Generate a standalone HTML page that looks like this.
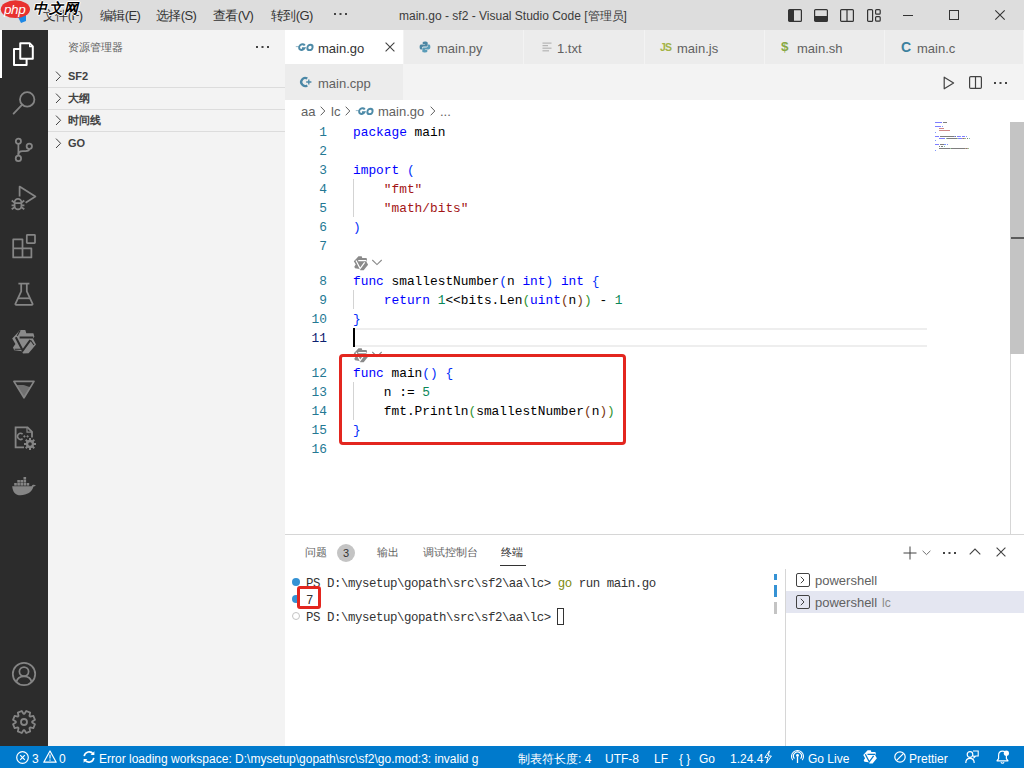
<!DOCTYPE html>
<html><head><meta charset="utf-8">
<style>
*{box-sizing:border-box}
body{margin:0;width:1024px;height:768px;overflow:hidden;position:relative;font-family:"Liberation Sans",sans-serif;background:#fff}
.a{position:absolute}
.t{position:absolute;white-space:pre;line-height:1}
svg{position:absolute;overflow:visible}
#title{left:0;top:0;width:1024px;height:30px;background:#dddddd}
#act{left:0;top:30px;width:48px;height:716px;background:#2c2c2c}
#side{left:48px;top:30px;width:237px;height:716px;background:#f3f3f3}
#status{left:0;top:746px;width:1024px;height:22px;background:#007acc}
.menu{font-size:13px;color:#333;top:9px;letter-spacing:-0.6px}
.tab{position:absolute;height:34px;background:#ececec;border-right:1px solid #f3f3f3}
.tabt{font-size:13px;color:#616161;top:11px}
.code{font-family:"Liberation Mono",monospace;font-size:12.83px;color:#000}
.ln{font-family:"Liberation Mono",monospace;font-size:12.83px;color:#237893;text-align:right;width:40px;left:287px}
.kw{color:#0000ff}.str{color:#a31515}.num{color:#098658}.b1{color:#0431fa}.b2{color:#319331}.b3{color:#7b3814}
.term{font-family:"Liberation Mono",monospace;font-size:12.4px;letter-spacing:-0.44px;color:#333}
.st{font-size:12px;color:#fff;top:6.5px}
</style></head><body>

<!-- TITLE BAR -->
<div id="title" class="a">
  <svg style="left:0;top:0" width="32" height="26" viewBox="0 0 32 26"><path d="M17 15 L26 14 L26 21 L21 23 Z" fill="#1e88e5"/><ellipse cx="15.4" cy="9.2" rx="14.6" ry="8.9" fill="#e8322f"/></svg>
  <div class="t" style="left:4px;top:3px;font-size:13.5px;font-style:italic;color:#fff;letter-spacing:-0.4px">php</div>
  <div class="t menu" style="left:43px">文件(F)</div>
  <div class="t" style="left:33px;top:1px;font-size:14px;font-weight:bold;font-style:italic;color:#000;letter-spacing:1.5px;text-shadow:1px 0 0 #fff,-1px 0 0 #fff,0 1px 0 #fff,0 -1px 0 #fff">中文网</div>
  <div class="t menu" style="left:100px">编辑(E)</div>
  <div class="t menu" style="left:156px">选择(S)</div>
  <div class="t menu" style="left:213px">查看(V)</div>
  <div class="t menu" style="left:271px">转到(G)</div>
  <svg style="left:334px;top:13px" width="13" height="2" viewBox="0 0 13 2" fill="#444"><rect x="0" y="0" width="2" height="2"/><rect x="5.5" y="0" width="2" height="2"/><rect x="11" y="0" width="2" height="2"/></svg>
  <div class="t" style="left:399px;top:10px;font-size:12px;color:#3b3b3b">main.go - sf2 - Visual Studio Code [管理员]</div>
  <svg style="left:788px;top:9px" width="14" height="13" viewBox="0 0 14 13"><rect x="0.6" y="0.6" width="12.8" height="11.8" rx="1" fill="none" stroke="#333" stroke-width="1.2"/><rect x="1" y="1" width="5" height="11" fill="#333"/></svg>
  <svg style="left:814px;top:9px" width="14" height="13" viewBox="0 0 14 13"><rect x="0.6" y="0.6" width="12.8" height="11.8" rx="1" fill="none" stroke="#333" stroke-width="1.2"/><rect x="1" y="7" width="12" height="5" fill="#333"/></svg>
  <svg style="left:840px;top:9px" width="14" height="13" viewBox="0 0 14 13"><rect x="0.6" y="0.6" width="12.8" height="11.8" rx="1" fill="none" stroke="#333" stroke-width="1.2"/><rect x="6.4" y="1" width="1.2" height="11" fill="#333"/></svg>
  <svg style="left:867px;top:9px" width="14" height="13" viewBox="0 0 14 13"><rect x="0.6" y="0.6" width="5" height="11.8" rx="1" fill="none" stroke="#333" stroke-width="1.2"/><rect x="8.6" y="0.6" width="4.6" height="4.6" rx="1" fill="none" stroke="#333" stroke-width="1.2"/><rect x="8.6" y="7.6" width="4.6" height="4.6" rx="1" fill="none" stroke="#333" stroke-width="1.2"/></svg>
  <div class="a" style="left:903px;top:15px;width:10px;height:1px;background:#333"></div>
  <div class="a" style="left:949px;top:10px;width:10px;height:10px;border:1px solid #333"></div>
  <svg style="left:995px;top:10px" width="10" height="10" viewBox="0 0 10 10"><path d="M0.3 0.3L9.7 9.7M9.7 0.3L0.3 9.7" stroke="#333" stroke-width="1.1"/></svg>
</div>

<!-- ACTIVITY BAR -->
<div id="act" class="a"></div>
<div id="actbar">
<div class="a" style="left:0;top:30px;width:2px;height:48px;background:#fff"></div>
<!-- explorer -->
<svg style="left:12px;top:42px" width="24" height="24" viewBox="0 0 24 24" fill="none" stroke="#fff" stroke-width="2" stroke-linejoin="round"><path d="M8.25 1.2H17.6L20.8 4.4V16.7H8.25Z"/><path d="M8.25 7H2V22.9H14.6V16.7"/><path d="M17.6 1.6V4.6H20.5" stroke-width="1.2"/></svg>
<!-- search -->
<svg style="left:12px;top:91px" width="24" height="24" viewBox="0 0 24 24" fill="none" stroke="#858585" stroke-width="1.8"><circle cx="15.2" cy="8.4" r="7.2"/><path d="M10.2 13.6L1.6 22.6" stroke-linecap="round"/></svg>
<!-- scm -->
<svg style="left:12px;top:138px" width="24" height="24" viewBox="0 0 24 24" fill="none" stroke="#858585" stroke-width="1.75"><circle cx="6.4" cy="3.3" r="2.6"/><circle cx="17.3" cy="8.3" r="2.7"/><circle cx="6.4" cy="20.4" r="2.7"/><path d="M6.4 5.9V17.7"/><path d="M6.4 16.5C6.4 14 8 13 10.5 13H13.5C15.8 13 17.3 12.3 17.3 11"/></svg>
<!-- debug -->
<svg style="left:12px;top:186px" width="24" height="24" viewBox="0 0 24 24" fill="none" stroke="#858585" stroke-width="1.75" stroke-linejoin="round"><path d="M7.6 10.5V0.6L23.4 10.5L13.6 16.8"/><path d="M2.6 16.2a3.4 3.4 0 0 1 6.8 0V20a3.4 3.4 0 0 1-6.8 0Z"/><path d="M2.6 17.2H9.4M-0.3 14.5L2.4 16.5M12.3 14.5L9.6 16.5M-0.4 19.3H2.6M9.4 19.3H12.4M-0.3 23.3L2.6 21.2M12.3 23.3L9.4 21.2"/></svg>
<!-- extensions -->
<svg style="left:12px;top:234px" width="24" height="24" viewBox="0 0 24 24" fill="none" stroke="#858585" stroke-width="1.75" stroke-linejoin="round"><path d="M1.2 5.4H10.5V14.4H19.4V23.4H1.2Z"/><path d="M1.2 14.4H10.5V23.4"/><rect x="14.8" y="0.9" width="8.2" height="8.2" rx="0.6"/></svg>
<!-- testing flask -->
<svg style="left:12px;top:282px" width="24" height="24" viewBox="0 0 24 24" fill="none" stroke="#858585" stroke-width="1.75" stroke-linejoin="round"><path d="M6.4 1.6H17.4"/><path d="M9.2 1.6V9.4L3.4 21.8a0.8 0.8 0 0 0 0.8 1.1H19.8a0.8 0.8 0 0 0 0.8-1.1L14.8 9.4V1.6"/><path d="M6 16.3H18"/></svg>
<!-- qodo -->
<svg style="left:10px;top:328px" width="28" height="28" viewBox="0 0 28 28"><path d="M9.9 2L15.3 2L16.3 5.2L23.4 5.2L24.4 8.6L23 10.8L26 16.4L18.6 25.3L13 25.5L11.8 23.3L4.2 22.2L3 19.5L5.4 16L2.2 10.6L7.4 5Z" fill="#8a8a8a"/><path d="M9.6 9.5H23.2M5.8 9.2L12.7 22.5L20.3 12.2" stroke="#2c2c2c" stroke-width="2" fill="none" stroke-linejoin="miter"/><path d="M10.2 2.2L7.3 7.8M4.6 21.3H11M20.6 12.3L24 17" stroke="#2c2c2c" stroke-width="1.1" fill="none"/></svg>
<!-- triangle -->
<svg style="left:12px;top:378px" width="24" height="24" viewBox="0 0 24 24"><path d="M4.3 7.3C7 7 10.5 6.8 12.5 7.2C14.5 7.6 16 8.8 18.6 8.9L12 19.8Z" fill="#707070"/><path d="M1.9 3.4H22L12 19.8Z" fill="none" stroke="#858585" stroke-width="1.7" stroke-linejoin="round"/></svg>
<!-- doc gear -->
<svg style="left:12px;top:426px" width="24" height="24" viewBox="0 0 24 24" fill="none" stroke="#858585" stroke-width="1.8"><path d="M12 21.4H3.6V1.4H15.6L20 5.8V11.5"/><path d="M15 1.6V6.2H19.8" stroke-width="1.2"/><path d="M10.6 8.2a3 3 0 1 0 0 4.4" stroke-width="1.6"/><path d="M11.2 10.4h2.4M12.4 9.2v2.4M14.4 10.4h2.4M15.6 9.2v2.4" stroke-width="0.9"/></svg>
<svg style="left:24px;top:438px" width="12" height="12" viewBox="0 0 12 12"><g fill="#858585"><circle cx="6" cy="6" r="4.2"/><rect x="5" y="0" width="2" height="12"/><rect x="0" y="5" width="12" height="2"/><rect x="5" y="0" width="2" height="12" transform="rotate(45 6 6)"/><rect x="5" y="0" width="2" height="12" transform="rotate(-45 6 6)"/></g><circle cx="6" cy="6" r="1.8" fill="#2c2c2c"/></svg>
<!-- docker -->
<svg style="left:12px;top:474px" width="24" height="24" viewBox="0 0 24 24" fill="#858585"><path d="M0.2 12.2H19.6C20.2 11 21.3 10.6 22.6 10.9C23.4 11.1 23.8 11.4 23.8 11.6C23 12.5 22 12.6 21.5 12.6C20 18 15 21.3 8.5 21.3C3.5 21.3 0.6 18 0.2 12.2Z"/><rect x="2.2" y="9" width="2.6" height="2.6"/><rect x="5.3" y="9" width="2.6" height="2.6"/><rect x="8.4" y="9" width="2.6" height="2.6"/><rect x="11.5" y="9" width="2.6" height="2.6"/><rect x="14.6" y="9" width="2.6" height="2.6"/><rect x="5.3" y="6" width="2.6" height="2.6"/><rect x="8.4" y="6" width="2.6" height="2.6"/><rect x="11.5" y="6" width="2.6" height="2.6"/><rect x="11.5" y="3" width="2.6" height="2.6"/></svg>
<!-- account -->
<svg style="left:12px;top:662px" width="24" height="24" viewBox="0 0 24 24" fill="none" stroke="#858585" stroke-width="1.75"><circle cx="12" cy="12" r="11.2"/><circle cx="12" cy="9.6" r="4.6"/><path d="M4.4 20C5.2 16.4 8.2 14.3 12 14.3S18.8 16.4 19.6 20"/></svg>
<!-- gear -->
<svg style="left:12px;top:710px" width="24" height="24" viewBox="0 0 24 24" fill="none" stroke="#858585" stroke-width="1.8" stroke-linejoin="round"><path d="M12.50 3.82 L14.23 1.02 L18.18 2.66 L17.43 5.86 L18.14 6.57 L21.34 5.82 L22.98 9.77 L20.18 11.50 L20.18 12.50 L22.98 14.23 L21.34 18.18 L18.14 17.43 L17.43 18.14 L18.18 21.34 L14.23 22.98 L12.50 20.18 L11.50 20.18 L9.77 22.98 L5.82 21.34 L6.57 18.14 L5.86 17.43 L2.66 18.18 L1.02 14.23 L3.82 12.50 L3.82 11.50 L1.02 9.77 L2.66 5.82 L5.86 6.57 L6.57 5.86 L5.82 2.66 L9.77 1.02 L11.50 3.82Z"/><circle cx="12" cy="12" r="3"/></svg>
</div>


<!-- SIDEBAR -->
<div id="side" class="a">
  <div class="t" style="left:20px;top:12px;font-size:11px;color:#616161">资源管理器</div>
  <div style="position:absolute;left:208px;top:0"><svg style="left:0px;top:16px" width="13" height="2" viewBox="0 0 13 2" fill="#424242"><rect x="0" y="0" width="2" height="2"/><rect x="5.5" y="0" width="2" height="2"/><rect x="11" y="0" width="2" height="2"/></svg></div>
  <div class="a" style="left:0;top:57px;width:237px;height:1px;background:#dcdcdc"></div>
  <div class="a" style="left:0;top:79px;width:237px;height:1px;background:#dcdcdc"></div>
  <div class="a" style="left:0;top:101px;width:237px;height:1px;background:#dcdcdc"></div>
  <div class="t" style="left:20px;top:41px;font-size:11px;font-weight:bold;color:#424242">SF2</div>
  <div class="t" style="left:20px;top:63px;font-size:11px;font-weight:bold;color:#424242">大纲</div>
  <div class="t" style="left:20px;top:85px;font-size:11px;font-weight:bold;color:#424242">时间线</div>
  <div class="t" style="left:20px;top:108px;font-size:11px;font-weight:bold;color:#424242">GO</div>
</div>

<svg style="left:55px;top:71px" width="7" height="11" viewBox="0 0 7 11"><path d="M1 0.6L5.6 5.3L1 10" fill="none" stroke="#424242" stroke-width="1"/></svg>
<svg style="left:55px;top:93px" width="7" height="11" viewBox="0 0 7 11"><path d="M1 0.6L5.6 5.3L1 10" fill="none" stroke="#424242" stroke-width="1"/></svg>
<svg style="left:55px;top:115px" width="7" height="11" viewBox="0 0 7 11"><path d="M1 0.6L5.6 5.3L1 10" fill="none" stroke="#424242" stroke-width="1"/></svg>
<svg style="left:55px;top:138px" width="7" height="11" viewBox="0 0 7 11"><path d="M1 0.6L5.6 5.3L1 10" fill="none" stroke="#424242" stroke-width="1"/></svg>
<!-- EDITOR -->
<div class="a" style="left:285px;top:30px;width:739px;height:70px;background:#f3f3f3"></div>
<div class="tab" style="left:285px;top:30px;width:119px;background:#fff"></div>
<div class="t tabt" style="left:318px;top:42px;color:#333">main.go</div>
<div class="tab" style="left:404px;top:30px;width:120px"></div>
<div class="t tabt" style="left:437px;top:42px">main.py</div>
<div class="tab" style="left:524px;top:30px;width:121px"></div>
<div class="t tabt" style="left:557px;top:42px">1.txt</div>
<div class="tab" style="left:645px;top:30px;width:120px"></div>
<div class="t tabt" style="left:677px;top:42px">main.js</div>
<div class="tab" style="left:765px;top:30px;width:120px"></div>
<div class="t tabt" style="left:797px;top:42px">main.sh</div>
<div class="tab" style="left:885px;top:30px;width:139px"></div>
<div class="t tabt" style="left:917px;top:42px">main.c</div>
<div class="tab" style="left:285px;top:64px;width:119px;height:36px"></div>
<div class="t tabt" style="left:318px;top:77px">main.cpp</div>

<div class="t" style="left:301px;top:105px;font-size:13px;color:#616161">aa</div>


<!-- tab icons -->
<svg style="left:295px;top:43px" width="20" height="9" viewBox="0 0 20 9"><path d="M0.8 3.6H4.2" stroke="#8fb3c4" stroke-width="0.9"/><g transform="skewX(-8)"><path d="M10.1 2.6A2.9 2.9 0 1 0 10.3 5.2H7.6" fill="none" stroke="#4e8ba8" stroke-width="1.9"/><ellipse cx="15.6" cy="4.4" rx="2.6" ry="2.7" fill="none" stroke="#4e8ba8" stroke-width="1.9"/></g></svg>
<svg style="left:385px;top:42px" width="10" height="10" viewBox="0 0 10 10"><path d="M0.6 0.6L9.4 9.4M9.4 0.6L0.6 9.4" stroke="#424242" stroke-width="1.1"/></svg>
<svg style="left:419px;top:41px" width="12" height="12" viewBox="0 0 12 12"><path d="M5.9 0.5C3.6 0.5 3.7 1.5 3.7 1.5V3H6.1V3.6H2.4C2.4 3.6 0.6 3.4 0.6 5.9C0.6 8.5 2.1 8.4 2.1 8.4H3.1V7.2C3.1 7.2 3 5.6 4.6 5.6H7.2C7.2 5.6 8.7 5.7 8.7 4.2V1.8C8.7 1.8 8.9 0.5 5.9 0.5Z" fill="#4b86a3"/><path d="M6.1 11.5C8.4 11.5 8.3 10.5 8.3 10.5V9H5.9V8.4H9.6C9.6 8.4 11.4 8.6 11.4 6.1C11.4 3.5 9.9 3.6 9.9 3.6H8.9V4.8C8.9 4.8 9 6.4 7.4 6.4H4.8C4.8 6.4 3.3 6.3 3.3 7.8V10.2C3.3 10.2 3.1 11.5 6.1 11.5Z" fill="#5a9cb8"/></svg>
<svg style="left:542px;top:42px" width="10" height="10" viewBox="0 0 10 10" fill="#b5b5b5"><rect x="0.5" y="0.5" width="9" height="1.2"/><rect x="0.5" y="3" width="5.5" height="1.2"/><rect x="0.5" y="5.6" width="9" height="1.2"/><rect x="0.5" y="8.2" width="6.5" height="1.2"/></svg>
<div class="t" style="left:660px;top:42px;font-size:10.5px;font-weight:bold;color:#a3b346;letter-spacing:-0.8px">JS</div>
<div class="t" style="left:781px;top:40px;font-size:13.5px;font-weight:bold;color:#87a843">$</div>
<div class="t" style="left:901px;top:40px;font-size:14px;font-weight:bold;color:#3d819e">C</div>
<svg style="left:299px;top:76px" width="14" height="12" viewBox="0 0 14 12"><path d="M8.3 2.6A4 4 0 1 0 8.3 9.4" fill="none" stroke="#4a87a6" stroke-width="2.3"/><path d="M7.2 6H12.4M9.8 3.6V8.4" stroke="#4a87a6" stroke-width="1.3"/></svg>
<!-- breadcrumbs -->
<div class="t" style="left:331px;top:105px;font-size:13px;color:#616161">lc</div>
<svg style="left:320px;top:106px" width="6" height="10" viewBox="0 0 6 10"><path d="M0.7 0.7L4.8 5L0.7 9.3" fill="none" stroke="#616161" stroke-width="1"/></svg>
<svg style="left:345px;top:106px" width="6" height="10" viewBox="0 0 6 10"><path d="M0.7 0.7L4.8 5L0.7 9.3" fill="none" stroke="#616161" stroke-width="1"/></svg>
<svg style="left:355px;top:107px" width="20" height="9" viewBox="0 0 20 9"><path d="M0.8 3.6H4.2" stroke="#8fb3c4" stroke-width="0.9"/><g transform="skewX(-8)"><path d="M10.1 2.6A2.9 2.9 0 1 0 10.3 5.2H7.6" fill="none" stroke="#4e8ba8" stroke-width="1.9"/><ellipse cx="15.6" cy="4.4" rx="2.6" ry="2.7" fill="none" stroke="#4e8ba8" stroke-width="1.9"/></g></svg>
<div class="t" style="left:378px;top:105px;font-size:13px;color:#616161">main.go</div>
<svg style="left:430px;top:106px" width="6" height="10" viewBox="0 0 6 10"><path d="M0.7 0.7L4.8 5L0.7 9.3" fill="none" stroke="#616161" stroke-width="1"/></svg>
<div class="t" style="left:440px;top:105px;font-size:13px;color:#616161">...</div>
<!-- editor actions -->
<svg style="left:943px;top:76px" width="12" height="14" viewBox="0 0 12 14"><path d="M1.2 1.2L10.6 7L1.2 12.8Z" fill="none" stroke="#424242" stroke-width="1.2" stroke-linejoin="round"/></svg>
<svg style="left:969px;top:76px" width="13" height="13" viewBox="0 0 13 13"><rect x="0.6" y="0.6" width="11.8" height="11.8" rx="1.2" fill="none" stroke="#424242" stroke-width="1.2"/><path d="M6.5 0.6V12.4" stroke="#424242" stroke-width="1.2"/></svg>
<svg style="left:994px;top:82px" width="13" height="2" viewBox="0 0 13 2" fill="#424242"><rect x="0" y="0" width="2" height="2"/><rect x="5.5" y="0" width="2" height="2"/><rect x="11" y="0" width="2" height="2"/></svg>
<!-- code -->
<div id="code">
<div class="a" style="left:353px;top:328px;width:574px;height:19px;border-top:2px solid #eeeeee;border-bottom:2px solid #eeeeee"></div>
<div class="t ln" style="top:123px;line-height:19px;color:#237893">1</div>
<div class="t code" style="left:353px;top:123px;line-height:19px"><span class="kw">package</span> main</div>
<div class="t ln" style="top:142px;line-height:19px;color:#237893">2</div>
<div class="t ln" style="top:161px;line-height:19px;color:#237893">3</div>
<div class="t code" style="left:353px;top:161px;line-height:19px"><span class="kw">import</span> <span class="b1">(</span></div>
<div class="t ln" style="top:180px;line-height:19px;color:#237893">4</div>
<div class="t code" style="left:353px;top:180px;line-height:19px">    <span class="str">"fmt"</span></div>
<div class="t ln" style="top:199px;line-height:19px;color:#237893">5</div>
<div class="t code" style="left:353px;top:199px;line-height:19px">    <span class="str">"math/bits"</span></div>
<div class="t ln" style="top:218px;line-height:19px;color:#237893">6</div>
<div class="t code" style="left:353px;top:218px;line-height:19px"><span class="b1">)</span></div>
<div class="t ln" style="top:237px;line-height:19px;color:#237893">7</div>
<div class="t ln" style="top:272px;line-height:19px;color:#237893">8</div>
<div class="t code" style="left:353px;top:272px;line-height:19px"><span class="kw">func</span> smallestNumber<span class="b1">(</span>n <span class="kw">int</span><span class="b1">)</span> <span class="kw">int</span> <span class="b1">{</span></div>
<div class="t ln" style="top:291px;line-height:19px;color:#237893">9</div>
<div class="t code" style="left:353px;top:291px;line-height:19px">    <span class="kw">return</span> <span class="num">1</span>&lt;&lt;bits.Len<span class="b2">(</span><span class="kw">uint</span><span class="b3">(</span>n<span class="b3">)</span><span class="b2">)</span> - <span class="num">1</span></div>
<div class="t ln" style="top:310px;line-height:19px;color:#237893">10</div>
<div class="t code" style="left:353px;top:310px;line-height:19px"><span class="b1">}</span></div>
<div class="t ln" style="top:329px;line-height:19px;color:#0b216f">11</div>
<div class="t ln" style="top:364px;line-height:19px;color:#237893">12</div>
<div class="t code" style="left:353px;top:364px;line-height:19px"><span class="kw">func</span> main<span class="b1">()</span> <span class="b1">{</span></div>
<div class="t ln" style="top:383px;line-height:19px;color:#237893">13</div>
<div class="t code" style="left:353px;top:383px;line-height:19px">    n := <span class="num">5</span></div>
<div class="t ln" style="top:402px;line-height:19px;color:#237893">14</div>
<div class="t code" style="left:353px;top:402px;line-height:19px">    fmt.Println<span class="b2">(</span>smallestNumber<span class="b3">(</span>n<span class="b3">)</span><span class="b2">)</span></div>
<div class="t ln" style="top:421px;line-height:19px;color:#237893">15</div>
<div class="t code" style="left:353px;top:421px;line-height:19px"><span class="b1">}</span></div>
<div class="t ln" style="top:440px;line-height:19px;color:#237893">16</div>
</div>


<!-- editor decorations -->
<div class="a" style="left:353px;top:328px;width:2px;height:19px;background:#000"></div>
<div class="a" style="left:353px;top:179px;width:1px;height:38px;background:#d3d3d3"></div>
<div class="a" style="left:353px;top:290px;width:1px;height:19px;background:#d3d3d3"></div>
<div class="a" style="left:353px;top:382px;width:1px;height:38px;background:#d3d3d3"></div>
<!-- codelens -->
<svg style="left:353px;top:255px" width="32" height="16" viewBox="0 0 32 16"><g transform="translate(-0.5,0) scale(0.6)"><path d="M9.9 2L15.3 2L16.3 5.2L23.4 5.2L24.4 8.6L23 10.8L26 16.4L18.6 25.3L13 25.5L11.8 23.3L4.2 22.2L3 19.5L5.4 16L2.2 10.6L7.4 5Z" fill="#8a8a8a"/><path d="M9.6 9.5H23.2M5.8 9.2L12.7 22.5L20.3 12.2" stroke="#fff" stroke-width="2" fill="none"/></g><path d="M19.3 5L24 9.6L28.7 5" fill="none" stroke="#8a8a8a" stroke-width="1.1"/></svg>
<svg style="left:353px;top:347px" width="32" height="16" viewBox="0 0 32 16"><g transform="translate(-0.5,0) scale(0.6)"><path d="M9.9 2L15.3 2L16.3 5.2L23.4 5.2L24.4 8.6L23 10.8L26 16.4L18.6 25.3L13 25.5L11.8 23.3L4.2 22.2L3 19.5L5.4 16L2.2 10.6L7.4 5Z" fill="#8a8a8a"/><path d="M9.6 9.5H23.2M5.8 9.2L12.7 22.5L20.3 12.2" stroke="#fff" stroke-width="2" fill="none"/></g><path d="M19.3 5L24 9.6L28.7 5" fill="none" stroke="#8a8a8a" stroke-width="1.1"/></svg>
<!-- red box -->
<div class="a" style="left:339px;top:354px;width:287px;height:91px;border:3px solid #e3261f;border-radius:4px"></div>
<!-- minimap -->
<svg style="left:935px;top:122px" width="40" height="34" viewBox="0 0 40 34"><g opacity="0.5"><rect x="0" y="0" width="7" height="1" fill="#0000ff"/><rect x="8" y="0" width="4" height="1" fill="#000"/><rect x="0" y="4" width="6" height="1" fill="#0000ff"/><rect x="7" y="4" width="1" height="1" fill="#0431fa"/><rect x="4" y="6" width="5" height="1" fill="#a31515"/><rect x="4" y="8" width="11" height="1" fill="#a31515"/><rect x="0" y="10" width="1" height="1" fill="#0431fa"/><rect x="0" y="14" width="4" height="1" fill="#0000ff"/><rect x="5" y="14" width="14" height="1" fill="#000"/><rect x="19" y="14" width="1" height="1" fill="#0431fa"/><rect x="20" y="14" width="1" height="1" fill="#000"/><rect x="22" y="14" width="3" height="1" fill="#0000ff"/><rect x="25" y="14" width="1" height="1" fill="#0431fa"/><rect x="27" y="14" width="3" height="1" fill="#0000ff"/><rect x="31" y="14" width="1" height="1" fill="#0431fa"/><rect x="4" y="16" width="6" height="1" fill="#0000ff"/><rect x="11" y="16" width="1" height="1" fill="#098658"/><rect x="12" y="16" width="10" height="1" fill="#000"/><rect x="22" y="16" width="1" height="1" fill="#319331"/><rect x="23" y="16" width="4" height="1" fill="#0000ff"/><rect x="27" y="16" width="1" height="1" fill="#7b3814"/><rect x="28" y="16" width="1" height="1" fill="#000"/><rect x="29" y="16" width="1" height="1" fill="#7b3814"/><rect x="30" y="16" width="1" height="1" fill="#319331"/><rect x="32" y="16" width="1" height="1" fill="#000"/><rect x="34" y="16" width="1" height="1" fill="#098658"/><rect x="0" y="18" width="1" height="1" fill="#0431fa"/><rect x="0" y="22" width="4" height="1" fill="#0000ff"/><rect x="5" y="22" width="4" height="1" fill="#000"/><rect x="9" y="22" width="2" height="1" fill="#0431fa"/><rect x="12" y="22" width="1" height="1" fill="#0431fa"/><rect x="4" y="24" width="1" height="1" fill="#000"/><rect x="6" y="24" width="2" height="1" fill="#000"/><rect x="9" y="24" width="1" height="1" fill="#098658"/><rect x="4" y="26" width="11" height="1" fill="#000"/><rect x="15" y="26" width="1" height="1" fill="#319331"/><rect x="16" y="26" width="14" height="1" fill="#000"/><rect x="30" y="26" width="1" height="1" fill="#7b3814"/><rect x="31" y="26" width="1" height="1" fill="#000"/><rect x="32" y="26" width="1" height="1" fill="#7b3814"/><rect x="33" y="26" width="1" height="1" fill="#319331"/><rect x="0" y="28" width="1" height="1" fill="#0431fa"/></g></svg>
<!-- scrollbar -->
<div class="a" style="left:1010px;top:122px;width:14px;height:412px;border-left:1px solid #d6d6d6"></div>
<div class="a" style="left:1010px;top:122px;width:14px;height:232px;background:#c4c4c4"></div>
<div class="a" style="left:1011px;top:237px;width:13px;height:2px;background:#5a5a5a"></div>
<!-- PANEL -->
<div class="a" style="left:285px;top:534px;width:739px;height:1px;background:#d6d6d6"></div>


<div class="t" style="left:305px;top:547px;font-size:11px;color:#616161">问题</div>
<div class="a" style="left:337px;top:544px;width:18px;height:18px;border-radius:9px;background:#c4c4c4"></div>
<div class="t" style="left:343px;top:548px;font-size:11px;color:#333">3</div>
<div class="t" style="left:377px;top:547px;font-size:11px;color:#616161">输出</div>
<div class="t" style="left:423px;top:547px;font-size:11px;color:#616161">调试控制台</div>
<div class="t" style="left:501px;top:547px;font-size:11px;color:#333">终端</div>
<div class="a" style="left:500px;top:565px;width:26px;height:1px;background:#333"></div>
<!-- panel actions -->
<svg style="left:903px;top:546px" width="14" height="14" viewBox="0 0 14 14"><path d="M7 0.5V13.5M0.5 7H13.5" stroke="#424242" stroke-width="1"/></svg>
<svg style="left:922px;top:550px" width="9" height="6" viewBox="0 0 9 6"><path d="M0.6 0.8L4.5 4.6L8.4 0.8" fill="none" stroke="#616161" stroke-width="0.9"/></svg>
<svg style="left:943px;top:552px" width="13" height="2" viewBox="0 0 13 2" fill="#424242"><rect x="0" y="0" width="2" height="2"/><rect x="5.5" y="0" width="2" height="2"/><rect x="11" y="0" width="2" height="2"/></svg>
<svg style="left:969px;top:548px" width="12" height="7" viewBox="0 0 12 7"><path d="M0.7 6.3L6 1L11.3 6.3" fill="none" stroke="#424242" stroke-width="1.1"/></svg>
<svg style="left:996px;top:547px" width="10" height="10" viewBox="0 0 10 10"><path d="M0.6 0.6L9.4 9.4M9.4 0.6L0.6 9.4" stroke="#424242" stroke-width="1.1"/></svg>
<!-- terminal -->
<div class="a" style="left:292px;top:578px;width:8px;height:8px;border-radius:4px;background:#3592d4"></div>
<div class="a" style="left:292px;top:595px;width:8px;height:8px;border-radius:4px;background:#3592d4"></div>
<div class="a" style="left:292px;top:612px;width:8px;height:8px;border-radius:4px;border:1px solid #c4c4c4"></div>
<div class="t term" style="left:306px;top:576px;line-height:17px">PS D:\mysetup\gopath\src\sf2\aa\lc&gt; <span style="color:#7d8a0c">go</span> run main.go</div>
<div class="t term" style="left:306px;top:593px;line-height:17px">7</div>
<div class="t term" style="left:306px;top:610px;line-height:17px">PS D:\mysetup\gopath\src\sf2\aa\lc&gt; </div>
<div class="a" style="left:557px;top:608px;width:7px;height:17px;border:1px solid #333"></div>
<div class="a" style="left:297px;top:586px;width:24px;height:23px;border:3px solid #e3261f;border-radius:3px"></div>
<!-- terminal overview ruler -->
<div class="a" style="left:774px;top:574px;width:3px;height:6px;background:#3592d4"></div>
<div class="a" style="left:774px;top:585px;width:3px;height:12px;background:#3592d4"></div>
<div class="a" style="left:774px;top:602px;width:3px;height:12px;background:#c4c4c4"></div>
<!-- terminal tabs -->
<div class="a" style="left:785px;top:569px;width:1px;height:177px;background:#d6d6d6"></div>
<div class="a" style="left:786px;top:591px;width:238px;height:22px;background:#e4e6f1"></div>
<svg style="left:796px;top:573px" width="14" height="14" viewBox="0 0 14 14"><rect x="0.5" y="0.5" width="13" height="13" rx="1.5" fill="none" stroke="#424242" stroke-width="1"/><path d="M4.8 3.8L8 7L4.8 10.2" fill="none" stroke="#424242" stroke-width="1"/></svg>
<svg style="left:796px;top:595px" width="14" height="14" viewBox="0 0 14 14"><rect x="0.5" y="0.5" width="13" height="13" rx="1.5" fill="none" stroke="#424242" stroke-width="1"/><path d="M4.8 3.8L8 7L4.8 10.2" fill="none" stroke="#424242" stroke-width="1"/></svg>
<div class="t" style="left:815px;top:574px;font-size:13px;color:#616161">powershell</div>
<div class="t" style="left:815px;top:596px;font-size:13px;color:#616161">powershell</div>
<div class="t" style="left:882px;top:597px;font-size:12px;color:#8a8a8a">lc</div>
<!-- STATUS -->
<div id="status" class="a">
  <svg style="left:16px;top:5px" width="13" height="13" viewBox="0 0 13 13"><circle cx="6.5" cy="6.5" r="5.8" fill="none" stroke="#fff" stroke-width="1.2"/><path d="M4.2 4.2L8.8 8.8M8.8 4.2L4.2 8.8" stroke="#fff" stroke-width="1.2"/></svg>
  <div class="t st" style="left:32px">3</div>
  <svg style="left:43px;top:4px" width="14" height="13" viewBox="0 0 14 13"><path d="M7 1L13.2 12.2H0.8Z" fill="none" stroke="#fff" stroke-width="1.2" stroke-linejoin="round"/><path d="M7 4.6V8.6M7 9.6V10.8" stroke="#fff" stroke-width="1.2"/></svg>
  <div class="t st" style="left:59px">0</div>
  <svg style="left:82px;top:4px" width="14" height="14" viewBox="0 0 14 14"><path d="M2.2 6.2A5 5 0 0 1 11.2 4" fill="none" stroke="#fff" stroke-width="1.6"/><path d="M11.8 7.8A5 5 0 0 1 2.8 10" fill="none" stroke="#fff" stroke-width="1.6"/><path d="M12.4 1.2V5H8.6Z" fill="#fff"/><path d="M1.6 12.8V9H5.4Z" fill="#fff"/></svg>
  <div class="t st" style="left:99px">Error loading workspace: D:\mysetup\gopath\src\sf2\go.mod:3: invalid g</div>
  <div class="t st" style="left:518px">制表符长度: 4</div>
  <div class="t st" style="left:605px">UTF-8</div>
  <div class="t st" style="left:654px">LF</div>
  <div class="t st" style="left:679px">{ }</div>
  <div class="t st" style="left:699px">Go</div>
  <div class="t st" style="left:730px">1.24.4</div>
  <svg style="left:763px;top:4px" width="10" height="14" viewBox="0 0 10 14"><path d="M6.5 0.8L1.8 7.6H5L3.4 13.2L8.4 6H5.2Z" fill="none" stroke="#fff" stroke-width="1"/></svg>
  <svg style="left:791px;top:4px" width="13" height="14" viewBox="0 0 13 14"><circle cx="6.5" cy="5.5" r="1.4" fill="#fff"/><path d="M6.5 7V13" stroke="#fff" stroke-width="1.3"/><path d="M3.4 8.6A4 4 0 1 1 9.6 8.6" fill="none" stroke="#fff" stroke-width="1.2"/><path d="M1.8 10.2A6 6 0 1 1 11.2 10.2" fill="none" stroke="#fff" stroke-width="1.1"/></svg>
  <div class="t st" style="left:808px">Go Live</div>
  <svg style="left:862px;top:3px" width="16" height="16" viewBox="0 0 28 28"><path d="M9.9 2L15.3 2L16.3 5.2L23.4 5.2L24.4 8.6L23 10.8L26 16.4L18.6 25.3L13 25.5L11.8 23.3L4.2 22.2L3 19.5L5.4 16L2.2 10.6L7.4 5Z" fill="#fff"/><path d="M9.6 9.5H23.2M5.8 9.2L12.7 22.5L20.3 12.2" stroke="#007acc" stroke-width="2.2" fill="none"/></svg>
  <svg style="left:894px;top:5px" width="12" height="12" viewBox="0 0 12 12"><circle cx="6" cy="6" r="5.2" fill="none" stroke="#fff" stroke-width="1.2"/><path d="M2.4 9.6L9.6 2.4" stroke="#fff" stroke-width="1.2"/></svg>
  <div class="t st" style="left:909px">Prettier</div>
  <svg style="left:965px;top:4px" width="14" height="14" viewBox="0 0 14 14"><circle cx="5" cy="4.5" r="2.8" fill="none" stroke="#fff" stroke-width="1.2"/><path d="M0.8 13C0.8 9.8 2.6 8.4 5 8.4S9.2 9.8 9.2 13" fill="none" stroke="#fff" stroke-width="1.2"/><path d="M8 1H13.2V6H10.6L9 7.6V6H8" fill="none" stroke="#fff" stroke-width="1.1"/></svg>
  <svg style="left:996px;top:4px" width="13" height="14" viewBox="0 0 13 14"><path d="M6.5 1.2C4 1.2 2.6 3 2.6 5.4V8.6L1 10.8H12L10.4 8.6V5.4C10.4 3 9 1.2 6.5 1.2Z" fill="none" stroke="#fff" stroke-width="1.2" stroke-linejoin="round"/><path d="M5 12.2A1.6 1.6 0 0 0 8 12.2" fill="none" stroke="#fff" stroke-width="1.2"/><circle cx="10.4" cy="3.2" r="2.6" fill="#fff"/></svg>
</div>
</body></html>
